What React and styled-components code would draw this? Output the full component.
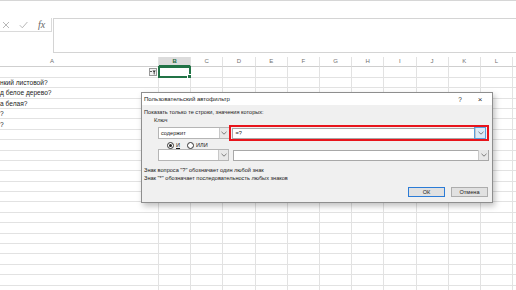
import React from "react";
import styled, { createGlobalStyle } from "styled-components";

const Global = createGlobalStyle`
  html, body { margin: 0; padding: 0; background: #fff; }
  body { width: 516px; height: 290px; overflow: hidden; font-family: "Liberation Sans", Arial, sans-serif; }
  #root { width: 516px; height: 290px; position: relative; overflow: hidden; }
`;

const Page = styled.div`
  position: relative;
  width: 516px;
  height: 290px;
  overflow: hidden;
  border-top: 1px solid #d6d6d6;
  box-sizing: border-box;
`;

const FormulaArea = styled.div`
  display: flex;
  align-items: flex-start;
  padding-top: 17px;
  height: 39px;
  box-sizing: border-box;
`;

const IconBox = styled.div`
  width: 52px;
  height: 14px;
  box-sizing: border-box;
  border-bottom: 1px solid #dadada;
  border-right: 1px solid #dadada;
  display: flex;
  align-items: center;
  gap: 9px;
  padding-left: 2px;
`;

const Fx = styled.span`
  font-family: "Liberation Serif", serif;
  font-style: italic;
  font-size: 10px;
  color: #666;
  margin-left: 1px;
`;

const FormulaInput = styled.div`
  flex: 1;
  margin-left: 1px;
  height: 35px;
  border: 1px solid #d4d4d4;
  border-right: none;
  box-sizing: border-box;
`;

const Gap = styled.div`
  height: 17px;
`;

const Sheet = styled.div`
  display: grid;
  grid-template-columns: 159px repeat(12, 32.2px);
  grid-auto-rows: 10.4px;
  width: 560px;
`;

const HeaderCell = styled.div`
  height: 9.6px;
  box-sizing: border-box;
  border-right: 1px solid #e2e2e2;
  border-bottom: ${(p) => (p.$active ? "2px solid #217346" : "1px solid #cfcfcf")};
  background: ${(p) => (p.$active ? "#dcdcdc" : "#fff")};
  color: ${(p) => (p.$active ? "#1e6b40" : "#707070")};
  font-size: 6px;
  font-weight: ${(p) => (p.$active ? "bold" : "normal")};
  display: flex;
  align-items: center;
  justify-content: ${(p) => (p.$left ? "flex-start" : "center")};
  padding-left: ${(p) => (p.$left ? "50px" : "0")};
`;

const Cell = styled.div`
  position: relative;
  box-sizing: border-box;
  border-right: 1px solid #e2e2e2;
  border-bottom: 1px solid #e2e2e2;
  font-size: 6.6px;
  color: #222;
  white-space: nowrap;
  display: flex;
  align-items: center;
  padding-left: 0;
`;

const SelectedCell = styled(Cell)`
  border: 2px solid #217346;
  margin-left: -1px;
  margin-top: -1px;
  height: calc(100% + 1px);
`;

const Handle = styled.span`
  position: absolute;
  right: -3px;
  bottom: -3px;
  width: 3px;
  height: 3px;
  background: #217346;
  border: 1px solid #fff;
`;

const FilterBtn = styled.span`
  position: absolute;
  right: 1px;
  top: 1px;
  width: 8px;
  height: 8px;
  box-sizing: border-box;
  border: 1px solid #9a9a9a;
  background: #f2f2f2;
  display: flex;
  align-items: center;
  justify-content: center;
`;

const Dialog = styled.div`
  position: absolute;
  left: 141px;
  top: 91px;
  width: 352px;
  height: 111px;
  box-sizing: border-box;
  border: 1px solid #8e8e8e;
  background: #f0f0f0;
  box-shadow: 2px 3px 6px rgba(0, 0, 0, 0.25);
  display: flex;
  flex-direction: column;
  font-size: 5.6px;
  color: #1a1a1a;
`;

const TitleBar = styled.div`
  height: 12px;
  background: #fff;
  display: flex;
  align-items: center;
  padding-left: 2px;
  font-size: 6px;
  flex-shrink: 0;
`;

const Title = styled.span`
  flex: 1;
`;

const TitleBtn = styled.span`
  width: 20px;
  text-align: center;
  font-size: ${(p) => p.$size || "7px"};
  color: #333;
  margin-right: ${(p) => p.$mr || "0"};
`;

const Body = styled.div`
  display: flex;
  flex-direction: column;
  padding: 4px 3px 0 2px;
`;

const Line = styled.div`
  height: 7px;
  line-height: 7px;
  padding-left: ${(p) => p.$indent || "0"};
  margin-top: ${(p) => p.$mt || "0"};
  white-space: nowrap;
`;

const CondRow = styled.div`
  display: flex;
  align-items: center;
  padding-left: 14px;
  margin-top: ${(p) => p.$mt || "0"};
  height: ${(p) => p.$h || "16px"};
`;

const Combo = styled.div`
  width: 72px;
  height: 12px;
  box-sizing: border-box;
  border: 1px solid #b5b5b5;
  background: #fff;
  display: flex;
  align-items: center;
  font-size: 5.6px;
  padding-left: 2px;
`;

const ComboText = styled.span`
  flex: 1;
`;

const DropBtn = styled.span`
  width: 10px;
  height: 10px;
  box-sizing: border-box;
  border-left: 1px solid #c8c8c8;
  background: ${(p) => (p.$active ? "#dbecf9" : "#e8e8e8")};
  outline: ${(p) => (p.$active ? "1px solid #5a9fdc" : "none")};
  display: flex;
  align-items: center;
  justify-content: center;
`;

const RedFrame = styled.div`
  width: 262px;
  height: 16px;
  box-sizing: border-box;
  border: 2px solid #e8141b;
  display: flex;
  align-items: center;
  padding: 0 1px 0 1px;
  margin-left: -1px;
`;

const ValueBox = styled.div`
  height: 11px;
  box-sizing: border-box;
  border: 1px solid #a8a8a8;
  background: #fff;
  display: flex;
  align-items: center;
  padding-left: 3px;
  margin-left: ${(p) => p.$ml || "0"};
  width: ${(p) => p.$w || "auto"};
  flex: ${(p) => (p.$w ? "none" : "1")};
`;

const ValueText = styled.span`
  flex: 1;
  font-size: 5.6px;
`;

const RadioRow = styled.div`
  display: flex;
  align-items: center;
  gap: 2px;
  padding-left: 23px;
  height: 8px;
`;

const Radio = styled.span`
  width: 5px;
  height: 5px;
  border-radius: 50%;
  border: 1px solid #333;
  background: #fff;
  display: flex;
  align-items: center;
  justify-content: center;
  &::after {
    content: "";
    width: 3px;
    height: 3px;
    border-radius: 50%;
    background: ${(p) => (p.$on ? "#222" : "transparent")};
  }
`;

const RadioLabel = styled.span`
  margin-right: 5px;
  text-decoration: ${(p) => (p.$u ? "underline" : "none")};
`;

const Buttons = styled.div`
  display: flex;
  justify-content: flex-end;
  gap: 6px;
  padding-right: 1px;
  margin-top: 5px;
`;

const Button = styled.div`
  width: 37px;
  height: 10px;
  box-sizing: border-box;
  border: 1px solid ${(p) => (p.$primary ? "#2b7bd6" : "#adadad")};
  background: #e1e1e1;
  display: flex;
  align-items: center;
  justify-content: center;
  font-size: 5.6px;
`;

const Chevron = () => (
  <svg width="6" height="4" viewBox="0 0 6 4">
    <path d="M0.5 0.8 L3 3.2 L5.5 0.8" fill="none" stroke="#606060" strokeWidth="0.8" />
  </svg>
);

const cols = ["A", "B", "C", "D", "E", "F", "G", "H", "I", "J", "K", "L", ""];
const colA = ["", "нкий листовой?", "д белое дерево?", "а белая?", "?", "?"];

export default function App() {
  const rows = Array.from({ length: 22 }, (_, i) => i);
  return (
    <>
      <Global />
      <Page>
        <FormulaArea>
          <IconBox>
            <svg width="8" height="8" viewBox="0 0 8 8">
              <path d="M1 1 L7 7 M7 1 L1 7" stroke="#b0b0b0" strokeWidth="0.9" />
            </svg>
            <svg width="9" height="8" viewBox="0 0 9 8">
              <path d="M0.8 4.2 L3.3 6.8 L8.4 1" fill="none" stroke="#b0b0b0" strokeWidth="0.9" />
            </svg>
            <Fx>fx</Fx>
          </IconBox>
          <FormulaInput />
        </FormulaArea>
        <Gap />
        <Sheet>
          {cols.map((c, i) => (
            <HeaderCell key={"h" + i} $active={c === "B"} $left={c === "A"}>
              {c}
            </HeaderCell>
          ))}
          {rows.map((r) =>
            cols.map((c, ci) => {
              if (c === "B" && r === 0) {
                return (
                  <SelectedCell key={ci + "-" + r}>
                    <Handle />
                  </SelectedCell>
                );
              }
              return (
                <Cell key={ci + "-" + r}>
                  {c === "A" && colA[r]}
                  {c === "A" && r === 0 && (
                    <FilterBtn>
                      <svg width="6" height="5" viewBox="0 0 6 5">
                        <path d="M0 1.5 L2 1.5" stroke="#333" strokeWidth="0.8" />
                        <path d="M2.5 0.5 L5.8 0.5 L4.6 2.2 L4.6 4.6 L3.7 4.2 L3.7 2.2 Z" fill="#333" />
                      </svg>
                    </FilterBtn>
                  )}
                </Cell>
              );
            })
          )}
        </Sheet>

        <Dialog>
          <TitleBar>
            <Title>Пользовательский автофильтр</Title>
            <TitleBtn $size="6.5px">?</TitleBtn>
            <TitleBtn $size="8px" $mr="2px">×</TitleBtn>
          </TitleBar>
          <Body>
            <Line>Показать только те строки, значения которых:</Line>
            <Line $indent="10px" $mt="1px">Ключ</Line>
            <CondRow $mt="1px">
              <Combo>
                <ComboText>содержит</ComboText>
                <DropBtn>
                  <Chevron />
                </DropBtn>
              </Combo>
              <RedFrame>
                <ValueBox>
                  <ValueText>=?</ValueText>
                  <DropBtn $active>
                    <Chevron />
                  </DropBtn>
                </ValueBox>
              </RedFrame>
            </CondRow>
            <RadioRow>
              <Radio $on />
              <RadioLabel $u>И</RadioLabel>
              <Radio />
              <RadioLabel>ИЛИ</RadioLabel>
            </RadioRow>
            <CondRow $h="12px">
              <Combo>
                <ComboText />
                <DropBtn>
                  <Chevron />
                </DropBtn>
              </Combo>
              <ValueBox $ml="4px" $w="256px">
                <ValueText />
                <DropBtn>
                  <Chevron />
                </DropBtn>
              </ValueBox>
            </CondRow>
            <Line $mt="6px">Знак вопроса "?" обозначает один любой знак</Line>
            <Line $mt="1px">Знак "*" обозначает последовательность любых знаков</Line>
            <Buttons>
              <Button $primary>ОК</Button>
              <Button>Отмена</Button>
            </Buttons>
          </Body>
        </Dialog>
      </Page>
    </>
  );
}
